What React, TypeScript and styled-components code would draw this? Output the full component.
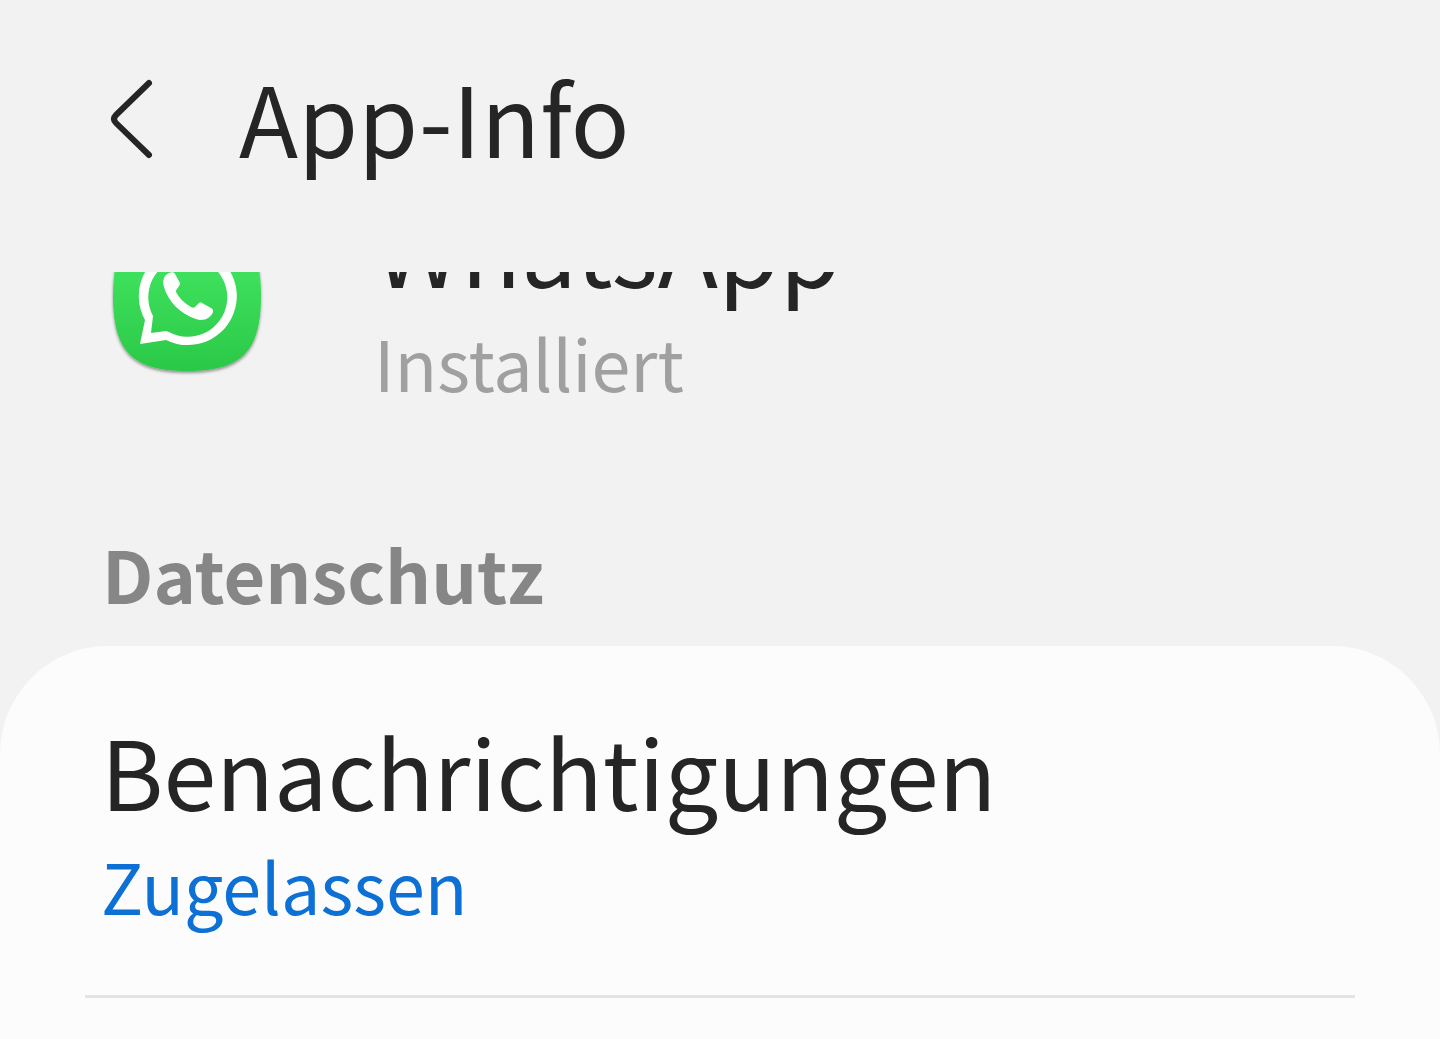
import React from "react";
import styled, { createGlobalStyle } from "styled-components";

const GlobalStyle = createGlobalStyle`
  *, *::before, *::after { box-sizing: border-box; }
  body {
    margin: 0;
    background: #f2f2f2;
    color: #252525;
    font-family: "Noto Sans CJK SC", "Noto Sans CJK JP", "Open Sans", sans-serif;
  }
`;

const Screen = styled.div`
  display: flex;
  flex-direction: column;
  height: 100vh;
`;

const Header = styled.header`
  flex: none;
  display: flex;
  align-items: center;
  gap: 79px;
  padding: 56px 104px 96px;
`;

const BackButton = styled.button`
  display: flex;
  padding: 0;
  border: 0;
  background: none;
  color: inherit;
  cursor: pointer;
`;

const Title = styled.h1`
  margin: 0;
  font-size: 97px;
  line-height: 120px;
  font-weight: 400;
`;

const ScrollArea = styled.main`
  flex: 1;
  min-height: 0;
  overflow: hidden;
  display: flex;
  flex-direction: column;
`;

const AppRow = styled.section`
  display: flex;
  align-items: center;
  gap: 112px;
  margin-top: -90px;
  padding: 0 112px;
`;

const AppName = styled.h2`
  margin: 0 0 4px;
  font-size: 99px;
  line-height: 126px;
  font-weight: 400;
`;

const Detail = styled.p<{ $tone: "muted" | "accent" }>`
  margin: 0;
  font-size: 70px;
  line-height: 100px;
  color: ${({ $tone }) => ($tone === "accent" ? "#0c70d4" : "#a0a0a0")};
`;

const SectionLabel = styled.h2`
  margin: 111px 0 23px;
  padding: 0 102px;
  font-size: 72px;
  line-height: 100px;
  font-weight: 700;
  color: #868686;
`;

const Card = styled.section`
  flex: 1 0 auto;
  padding: 0 85px;
  border-radius: 108px 108px 0 0;
  background: #fcfcfc;
`;

const SettingLink = styled.a`
  display: block;
  padding: 59px 16px 60px;
  border-bottom: 3px solid #e4e4e4;
  color: inherit;
  text-decoration: none;
`;

const SettingName = styled.h3`
  margin: 0;
  font-size: 95px;
  line-height: 130px;
  font-weight: 400;
`;

const BackIcon = () => (
  <svg width="56" height="84" viewBox="0 -3 56 84" overflow="visible" fill="none" aria-hidden="true">
    <path
      d="M45 6 L12 38 Q8 42 12 46 L45 78"
      stroke="currentColor"
      strokeWidth="6"
      strokeLinecap="round"
      strokeLinejoin="round"
    />
  </svg>
);

const WhatsAppIcon = () => (
  <svg width="150" height="150" viewBox="0 1 150 150" overflow="visible" aria-hidden="true">
    <defs>
      <linearGradient id="tile" x1="0" y1="0" x2="0" y2="1">
        <stop offset="0" stopColor="#4bf06c" />
        <stop offset="0.35" stopColor="#3de05c" />
        <stop offset="1" stopColor="#2bc848" />
      </linearGradient>
      <filter id="shade" x="-10%" y="-10%" width="120%" height="120%">
        <feDropShadow dx="0" dy="2" stdDeviation="1.5" floodColor="#000" floodOpacity="0.4" />
      </filter>
    </defs>
    <path
      d="M75 0C130 0 149 20 149 75C149 130 130 150 75 150C20 150 1 130 1 75C1 20 20 0 75 0Z"
      fill="url(#tile)"
      filter="url(#shade)"
    />
    <path
      fill="#fff"
      fillRule="evenodd"
      d="M28 123L33 99A49 49 0 1 1 54 119ZM39 112L41 95A39.500 39.500 0 1 1 57 111L54 110Z"
    />
    <path
      fill="#fff"
      d="M57 52C52 54 50 60 52 66C56 80 68 93 84 98C91 101 99 97 101 91C101 89 101 88 99 87L90 82C89 81 88 81 87 82L83 86C82 87 81 87 79 86C72 82 67 77 64 71C64 70 64 69 65 68L67 65C68 64 68 63 68 62L63 53C62 51 60 51 57 52Z"
    />
  </svg>
);

export default function App() {
  return (
    <>
      <GlobalStyle />
      <Screen>
        <Header>
          <BackButton type="button" aria-label="Zurück">
            <BackIcon />
          </BackButton>
          <Title>App-Info</Title>
        </Header>
        <ScrollArea>
          <AppRow>
            <WhatsAppIcon />
            <div>
              <AppName>WhatsApp</AppName>
              <Detail $tone="muted">Installiert</Detail>
            </div>
          </AppRow>
          <SectionLabel>Datenschutz</SectionLabel>
          <Card>
            <SettingLink href="#benachrichtigungen">
              <SettingName>Benachrichtigungen</SettingName>
              <Detail $tone="accent">Zugelassen</Detail>
            </SettingLink>
          </Card>
        </ScrollArea>
      </Screen>
    </>
  );
}
